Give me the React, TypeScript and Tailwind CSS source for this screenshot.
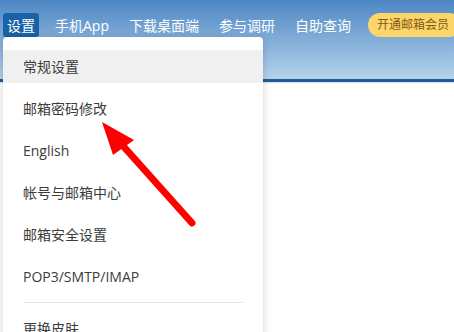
const navItems = ["手机App", "下载桌面端", "参与调研", "自助查询"];

const menuItems = [
  "常规设置",
  "邮箱密码修改",
  "English",
  "帐号与邮箱中心",
  "邮箱安全设置",
  "POP3/SMTP/IMAP",
];

function Arrow() {
  return (
    <svg
      className="absolute left-0 top-0 pointer-events-none"
      width="454"
      height="332"
      viewBox="0 0 454 332"
    >
      <line
        x1="124"
        y1="147"
        x2="192"
        y2="223"
        stroke="#ff0000"
        strokeWidth="7"
        strokeLinecap="round"
      />
      <polygon points="102,122 113,155 134,140" fill="#ff0000" />
    </svg>
  );
}

export default function App() {
  return (
    <div
      className="relative w-[454px] h-[332px] overflow-hidden bg-white"
      style={{ fontFamily: '"Open Sans", "Noto Sans CJK SC", sans-serif' }}
    >
      {/* header */}
      <div className="h-[82px] bg-gradient-to-b from-[#4d87c4] to-[#b6d3eb] border-b-[3px] border-[#1b5e9f]">
        <div className="flex items-center pt-[13px] pl-[3px] whitespace-nowrap">
          <div className="shrink-0 h-[24px] px-[4px] flex items-center rounded-[3px] bg-[#1a62a6] text-white text-[14px]">
            设置
          </div>
          <div className="shrink-0 flex items-center ml-[16px] gap-[20px] text-white text-[14px]">
            {navItems.map((n) => (
              <span key={n} className="shrink-0">
                {n}
              </span>
            ))}
          </div>
          <div className="shrink-0 ml-[17px] h-[24px] pl-[9px] pr-[12px] flex items-center rounded-full bg-[#fdd56b] text-[#7d5d12] text-[12px]">
            开通邮箱会员
          </div>
        </div>
      </div>
      <div className="h-[2px] bg-gradient-to-b from-[#dcdcdc] to-white" />

      {/* dropdown */}
      <div className="absolute left-[3px] top-[37px] w-[260px] h-[320px] bg-white rounded-[4px] shadow-[0_2px_8px_rgba(0,0,0,0.18)] pt-[13px] text-[14px] text-[#3c3c3c]">
        {menuItems.map((m, i) => (
          <div
            key={m}
            className={
              i === 0
                ? "h-[33px] mb-[9px] px-[20px] flex items-center bg-[#f0f0f0]"
                : "h-[33px] mb-[9px] px-[20px] flex items-center"
            }
          >
            {m}
          </div>
        ))}
        <div className="mx-[20px] h-px bg-[#e6e6e6] mb-[9px]" />
        <div className="h-[33px] px-[20px] flex items-center">更换皮肤</div>
      </div>

      <Arrow />
    </div>
  );
}
